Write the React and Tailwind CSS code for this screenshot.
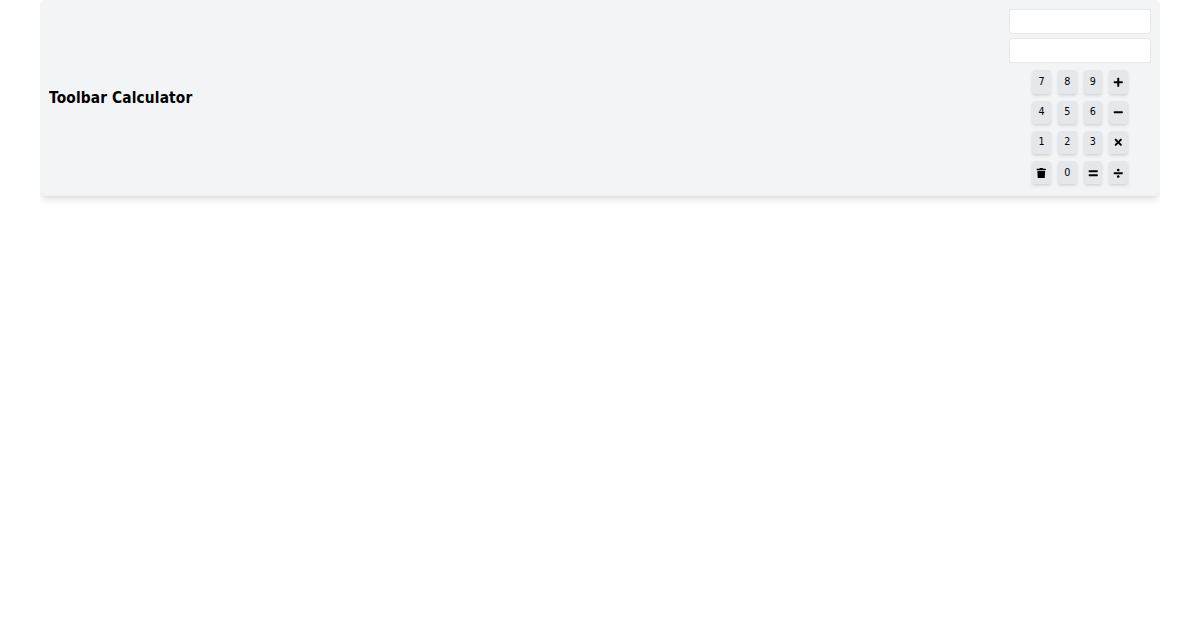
import { useState } from 'react'
import { FaPlus, FaMinus, FaTimes, FaDivide, FaEquals, FaTrash } from 'react-icons/fa'

const keys = [
  '7', '8', '9', '+',
  '4', '5', '6', '-',
  '1', '2', '3', '*',
  'C', '0', '=', '/',
]

const icons = {
  '+': <FaPlus />,
  '-': <FaMinus />,
  '*': <FaTimes />,
  '/': <FaDivide />,
  '=': <FaEquals />,
  'C': <FaTrash />,
}

const calc = (a, op, b) => {
  if (op === '+') return a + b
  if (op === '-') return a - b
  if (op === '*') return a * b
  return a / b
}

export default function App() {
  const [input, setInput] = useState('')
  const [result, setResult] = useState('')

  const handleClick = (key) => {
    if (key === 'C') {
      setInput('')
      setResult('')
      return
    }
    if (key === '=') {
      const parts = input.match(/\d+|[-+*/]/g)
      if (!parts) return
      let total = Number(parts[0])
      for (let i = 1; i + 1 < parts.length; i += 2) total = calc(total, parts[i], Number(parts[i + 1]))
      setResult(String(total))
      return
    }
    setInput(input + key)
  }

  return (
    <div className="mx-10 overflow-hidden pb-6 font-['DejaVu_Sans',sans-serif] text-black">
      <div className="flex h-[196px] items-center justify-between rounded-[5px] bg-gray-100 px-[9.33px] shadow-[0_6px_9px_-2px_rgba(0,0,0,0.1),0_2px_4px_-2px_rgba(0,0,0,0.1)]">
        <h1 className="origin-left scale-x-[0.92] text-[15px] leading-5 font-bold tracking-[0.13px]">Toolbar Calculator</h1>
        <div className="flex flex-col items-center">
          <input type="text" value={input} readOnly className="mb-1 h-[25px] w-[142px] rounded-[3.5px] border border-gray-200 bg-white px-2 text-[9.33px]" />
          <input type="text" value={result} readOnly className="mb-[7px] h-[25px] w-[142px] rounded-[3.5px] border border-gray-200 bg-white px-2 text-[9.33px]" />
          <div className="mb-[2.33px] ml-[0.8px] grid grid-cols-4 gap-[7px]">
            {keys.map((key) => (
              <button key={key} onClick={() => handleClick(key)} className="flex h-[23.33px] w-[18.67px] items-center justify-center rounded-[3.5px] bg-gray-200 text-[9.6px] leading-[14px] shadow-[0_2.3px_3.5px_-0.6px_rgba(0,0,0,0.1),0_1.2px_2.3px_-1.2px_rgba(0,0,0,0.1)] [&>svg]:size-[10.5px]">
                {icons[key] || key}
              </button>
            ))}
          </div>
        </div>
      </div>
    </div>
  )
}
